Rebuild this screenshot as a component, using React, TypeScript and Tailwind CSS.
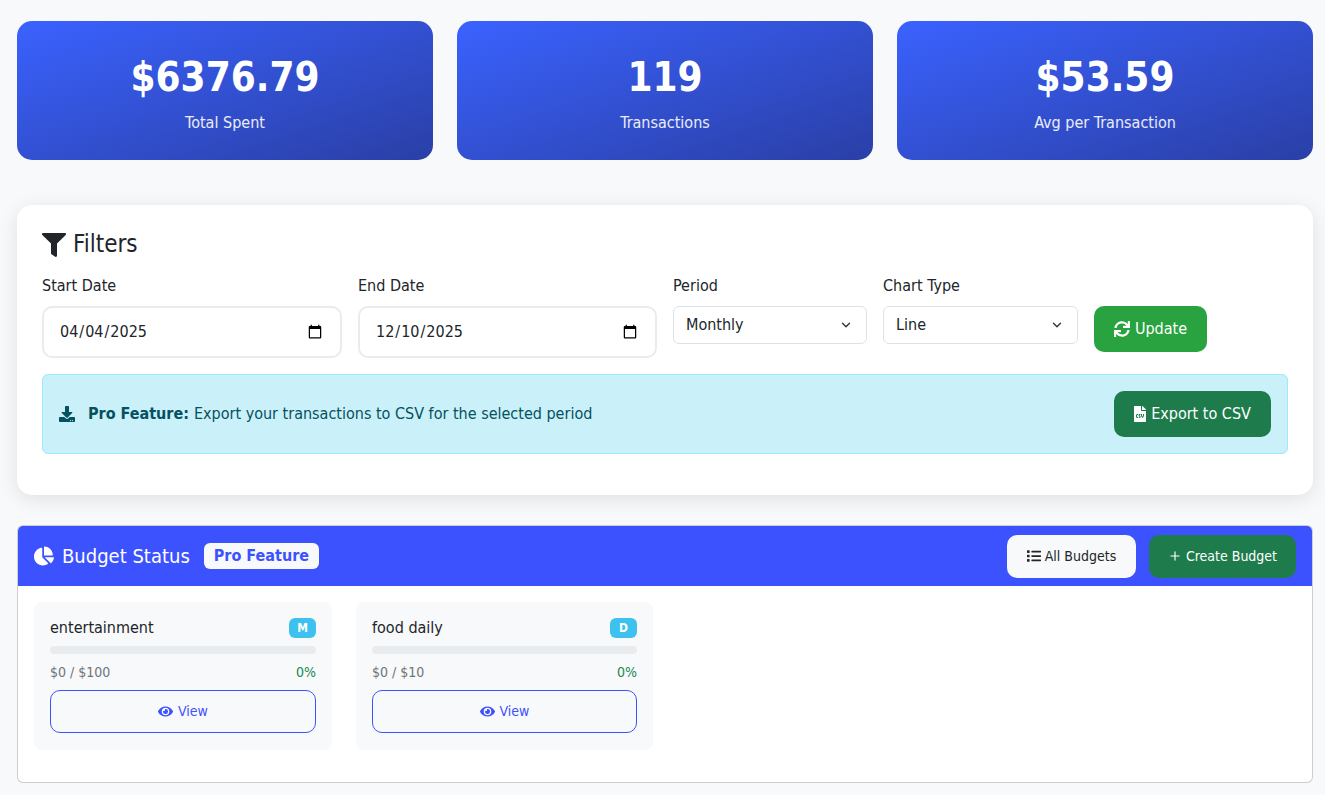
import React from "react";
import { FaFilter, FaDownload, FaSync, FaFileCsv, FaChartPie, FaList, FaEye } from "react-icons/fa";
import { Plus, ChevronDown } from "lucide-react";

const font = "[font-family:'DejaVu_Sans_Condensed','DejaVu_Sans',sans-serif] [font-stretch:condensed]";

function Stat({ value, label }: { value: string; label: string }) {
  return (
    <div className="h-[139px] flex-1 rounded-[15px] bg-gradient-to-br from-[#3a62ff] to-[#2a3fa6] pt-[30px] text-center text-white">
      <div className="text-[40px] leading-[52px] font-bold">{value}</div>
      <div className="mt-[8px] text-[16px] leading-[24px] text-white/90">{label}</div>
    </div>
  );
}

function DateField({ label, value, w }: { label: string; value: string; w: string }) {
  return (
    <div className={w}>
      <label className="mb-[8px] block text-[16px] leading-[24px]">{label}</label>
      <input
        type="date"
        defaultValue={value}
        className="h-[52px] w-full rounded-[10px] border-2 border-[#e9ecef] bg-white px-[15px] text-[16px] text-[#212529]"
      />
    </div>
  );
}

function SelectField({ label, value, w }: { label: string; value: string; w: string }) {
  return (
    <div className={w}>
      <label className="mb-[8px] block text-[16px] leading-[24px]">{label}</label>
      <div className="relative">
        <select
          defaultValue={value}
          className="h-[38px] w-full appearance-none rounded-[6px] border border-[#dee2e6] bg-white pl-[12px] text-[16px] text-[#212529]"
        >
          <option>{value}</option>
        </select>
        <ChevronDown className="pointer-events-none absolute top-[12px] right-[14px] h-[14px] w-[14px] text-[#343a40]" strokeWidth={2.5} />
      </div>
    </div>
  );
}

function Budget({ name, tag, amount, w }: { name: string; tag: string; amount: string; w: string }) {
  return (
    <div className={`${w} h-[148px] rounded-[8px] bg-[#f8f9fa] px-[16px] pt-[16px]`}>
      <div className="flex h-[20px] items-center justify-between">
        <span className="text-[16px] text-[#212529]">{name}</span>
        <span className="flex h-[20px] w-[27px] items-center justify-center rounded-[6px] bg-[#3dc1ee] text-[12px] font-bold text-white">{tag}</span>
      </div>
      <div className="mt-[8px] h-[8px] rounded-[4px] bg-[#e9ecef]" />
      <div className="mt-[8px] flex h-[21px] items-center justify-between text-[14px]">
        <span className="text-[#6c757d]">{amount}</span>
        <span className="text-[#198754]">0%</span>
      </div>
      <button className="mt-[7px] flex h-[43px] w-full items-center justify-center gap-[5px] rounded-[10px] border border-[#3d52ff] text-[14px] text-[#3d52ff]">
        <FaEye className="h-[15px] w-[15px]" /> View
      </button>
    </div>
  );
}

export default function App() {
  return (
    <div className={`${font} min-h-[795px] overflow-hidden bg-[#f8f9fa] pt-[21px] pr-[12px] pl-[17px] text-[#212529]`}>
      <div className="flex gap-[24px]">
        <Stat value="$6376.79" label="Total Spent" />
        <Stat value="119" label="Transactions" />
        <Stat value="$53.59" label="Avg per Transaction" />
      </div>

      <div className="mt-[45px] h-[290px] rounded-[15px] bg-white px-[25px] pt-[25px] shadow-[0_4px_20px_rgba(0,0,0,0.1)]">
        <h4 className="flex h-[29px] items-center gap-[7px] text-[24px] leading-[29px]">
          <FaFilter className="h-[24px] w-[24px]" /> Filters
        </h4>
        <div className="mt-[15px] flex items-start gap-[16px]">
          <DateField label="Start Date" value="2025-04-04" w="w-[300px]" />
          <DateField label="End Date" value="2025-12-10" w="w-[299px]" />
          <SelectField label="Period" value="Monthly" w="w-[194px]" />
          <SelectField label="Chart Type" value="Line" w="w-[195px]" />
          <button className="mt-[32px] flex h-[46px] w-[113px] items-center justify-center gap-[5px] rounded-[10px] bg-[#28a33f] text-[16px] text-white">
            <FaSync className="h-[16px] w-[16px]" /> Update
          </button>
        </div>
        <div className="mt-[16px] flex h-[80px] items-center justify-between rounded-[6px] border border-[#9eeaf9] bg-[#caf0fa] pr-[16px] pl-[16px] text-[16px] text-[#055160]">
          <div className="flex items-center">
            <FaDownload className="mr-[13px] h-[16px] w-[16px]" />
            <b className="mr-[5px]">Pro Feature:</b> Export your transactions to CSV for the selected period
          </div>
          <button className="flex h-[46px] w-[157px] items-center justify-center gap-[5px] rounded-[10px] bg-[#1e7c4c] text-[16px] text-white">
            <FaFileCsv className="h-[16px] w-[12px]" /> Export to CSV
          </button>
        </div>
      </div>

      <div className="mt-[30px] h-[258px] overflow-hidden rounded-[6px] border border-[#00000030] bg-white">
        <div className="flex h-[60px] items-center justify-between bg-[#3d52ff] pr-[16px] pl-[16px] text-white">
          <div className="flex items-center">
            <FaChartPie className="h-[20px] w-[20px]" />
            <span className="ml-[8px] text-[20px]">Budget Status</span>
            <span className="ml-[14px] flex h-[26px] items-center rounded-[6px] bg-[#f8f9fa] px-[10px] text-[16px] font-bold text-[#3d52ff]">Pro Feature</span>
          </div>
          <div className="flex gap-[13px]">
            <button className="flex h-[43px] w-[129px] items-center justify-center gap-[4px] rounded-[10px] bg-[#f8f9fa] text-[14px] text-[#212529]">
              <FaList className="h-[14px] w-[14px]" /> All Budgets
            </button>
            <button className="flex h-[43px] w-[147px] items-center justify-center gap-[4px] rounded-[10px] bg-[#1e7c4c] text-[14px] text-white">
              <Plus className="h-[14px] w-[14px]" /> Create Budget
            </button>
          </div>
        </div>
        <div className="flex gap-[24px] px-[16px] pt-[16px]">
          <Budget name="entertainment" tag="M" amount="$0 / $100" w="w-[298px]" />
          <Budget name="food daily" tag="D" amount="$0 / $10" w="w-[297px]" />
        </div>
      </div>
    </div>
  );
}
